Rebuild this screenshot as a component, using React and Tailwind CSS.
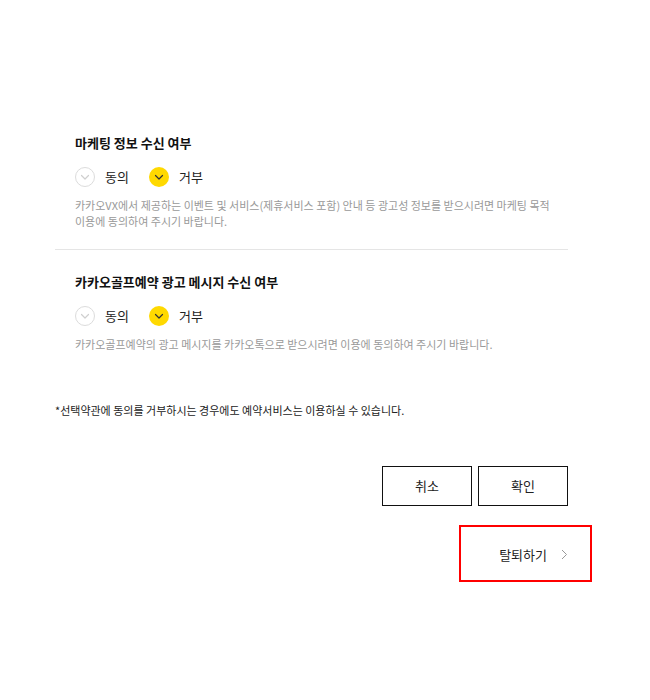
import React from "react";

const Check = ({ color }) => (
  <svg width="12" height="12" viewBox="0 0 12 12" fill="none">
    <path d="M2.5 4.5 L6 8 L9.5 4.5" stroke={color} strokeWidth="1.2" strokeLinecap="round" strokeLinejoin="round" />
  </svg>
);

const Radio = ({ on, label }) => (
  <div className="flex items-center">
    {on ? (
      <span className="w-5 h-5 rounded-full bg-[#ffd900] flex items-center justify-center">
        <Check color="#333" />
      </span>
    ) : (
      <span className="w-5 h-5 rounded-full border border-[#dcdcdc] bg-white flex items-center justify-center">
        <Check color="#cfcfcf" />
      </span>
    )}
    <span className="ml-[10px] text-[13px] leading-5 text-[#222]">{label}</span>
  </div>
);

const Section = ({ title, desc, border }) => (
  <div className={"pl-5 " + (border ? "pb-5 border-b border-[#e5e5e5]" : "")}>
    <div className="text-[13px] leading-5 font-semibold text-[#111]">{title}</div>
    <div className="mt-[14px] flex gap-[20px]">
      <Radio label="동의" />
      <Radio on label="거부" />
    </div>
    <div className="mt-[10px] text-[11px] leading-4 text-[#999]">{desc}</div>
  </div>
);

export default function App() {
  return (
    <div
      className="w-[650px] h-[700px] bg-white"
      style={{ fontFamily: '"Noto Sans CJK KR", "Noto Sans", sans-serif' }}
    >
      <div className="pt-[133px] pl-[55px] w-[568px]">
        <Section
          border
          title="마케팅 정보 수신 여부"
          desc={
            <>
              카카오VX에서 제공하는 이벤트 및 서비스(제휴서비스 포함) 안내 등 광고성 정보를 받으시려면 마케팅 목적
              <br />
              이용에 동의하여 주시기 바랍니다.
            </>
          }
        />
        <div className="pt-[22px]">
          <Section
            title="카카오골프예약 광고 메시지 수신 여부"
            desc="카카오골프예약의 광고 메시지를 카카오톡으로 받으시려면 이용에 동의하여 주시기 바랍니다."
          />
        </div>
        <div className="mt-[50px] text-[11px] leading-4 text-[#222]">
          *선택약관에 동의를 거부하시는 경우에도 예약서비스는 이용하실 수 있습니다.
        </div>
        <div className="mt-[48px] flex justify-end gap-[6px]">
          <button className="w-[90px] h-10 border border-[#111] bg-white text-[13px] text-[#222]">취소</button>
          <button className="w-[90px] h-10 border border-[#111] bg-white text-[13px] text-[#222]">확인</button>
        </div>
      </div>
      <div className="w-[592px] flex justify-end mt-[19px]">
        <div className="w-[133px] h-[57px] border-2 border-[#ff0000] flex items-center justify-end pr-[22px] pt-[2px]">
          <span className="text-[13px] text-[#222]">탈퇴하기</span>
          <svg className="ml-[14px]" width="7" height="11" viewBox="0 0 7 11" fill="none">
            <path d="M1 1 L5.5 5.5 L1 10" stroke="#999" strokeWidth="1" />
          </svg>
        </div>
      </div>
    </div>
  );
}
